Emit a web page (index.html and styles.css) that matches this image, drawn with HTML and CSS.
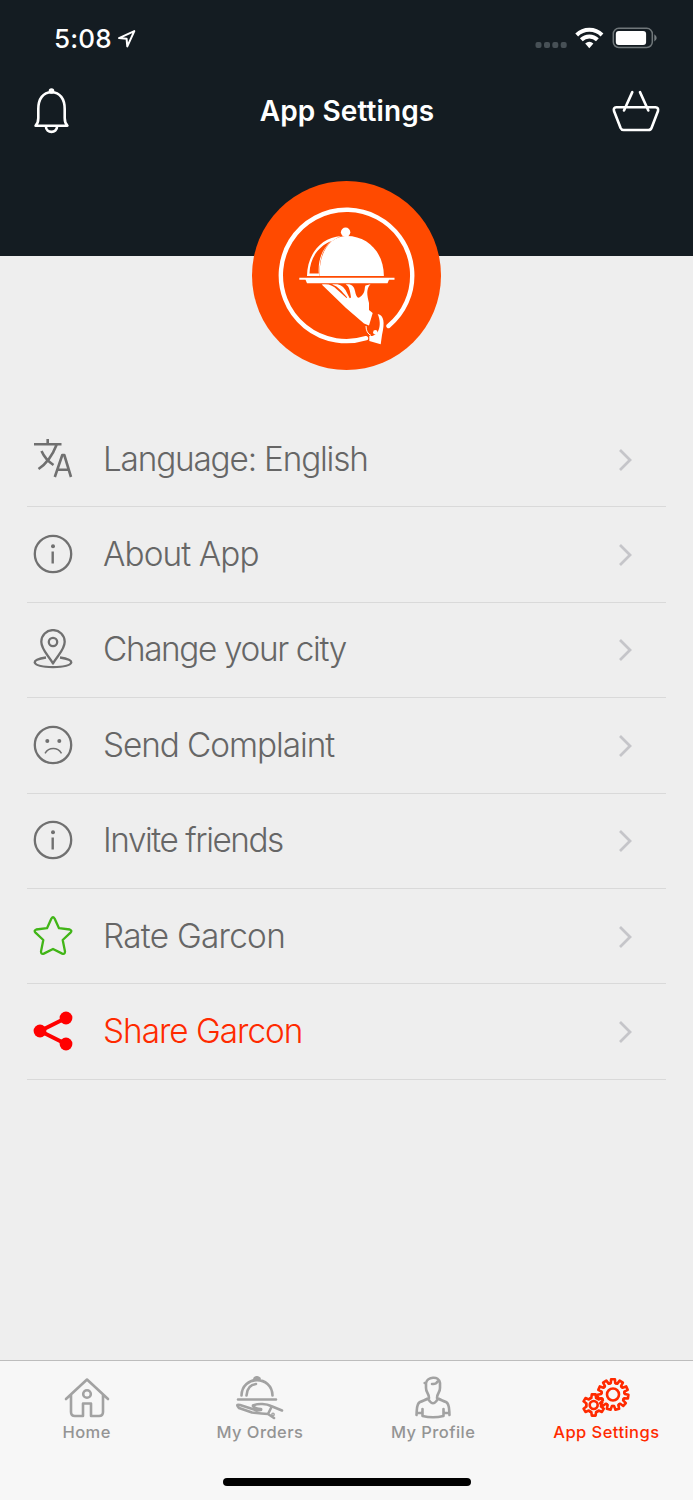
FILE: index.html
```html
<!DOCTYPE html>
<html lang="en">
<head>
<meta charset="utf-8">
<title>App Settings</title>
<link rel="stylesheet" href="styles.css">
</head>
<body>
<div class="app">
  <header class="header">
    <div class="status">
      <div class="status-time"><span class="clock">5:08</span>
        <svg class="locate" width="20" height="20" viewBox="0 0 20 20"><path d="M2 9.100 17.300 2.100 10.300 17.400 9.600 9.800Z"/></svg>
      </div>
      <svg class="status-icons" width="124" height="24" viewBox="0 0 124 24">
        <g fill="#475056"><rect x="1.500" y="16" width="6" height="6" rx="2"/><rect x="10" y="16" width="6" height="6" rx="2"/><rect x="18.300" y="16" width="6" height="6" rx="2"/><rect x="26.700" y="16" width="6" height="6" rx="2"/></g>
        <g fill="none" stroke="#fff" stroke-width="4"><path d="M42.700 9a18 18 0 0 1 25.300 0"/><path d="M47.300 13.700a11.500 11.500 0 0 1 16.100 0"/></g>
        <path fill="#fff" d="M51.200 17.600q4.100-3.700 8.200 0l-4.100 4.600z"/>
        <rect x="79.300" y="2.300" width="39" height="19.200" rx="5.500" fill="none" stroke="#70777a" stroke-width="1.500"/>
        <rect x="81.800" y="5" width="30.300" height="14" rx="3" fill="#fff"/>
        <path fill="#777e81" d="M120.300 8.200q4.800 3.700 0 7.400z"/>
      </svg>
    </div>
    <div class="navbar">
      <svg width="36" height="46" viewBox="0 0 36 46" class="line bell"><path d="M4.300 21C4.300 11 9 4.300 17.500 4.300S30.700 11 30.700 21v9q0 5 2.700 7.700H1.600Q4.300 35 4.300 30z"/><path d="M11.900 38.200c0 7.500 11.200 7.500 11.200 0"/><circle cx="17.500" cy="3" r="1.500"/></svg>
      <h1 class="title">App Settings</h1>
      <svg width="48" height="42" viewBox="0 0 48 42" class="line basket"><path d="M4.200 17.200H43.500Q46.700 17.500 46 21L39.500 38Q38.700 40 36.400 40H11.600Q9.500 40 8.600 38L2 21Q1.100 17.500 4.200 17.200M20.300 2.100 12 20.500M28 2.100 36.300 20.500"/></svg>
    </div>
  </header>
  <main class="content">
    <svg class="logo" width="189" height="190" viewBox="0 0 189 190">
      <circle cx="94.500" cy="94.500" r="94.500" fill="#ff4a00"/>
      <path d="M114 157.200A65.700 65.700 0 1 1 136.500 145" fill="none" stroke="#fff" stroke-width="4.400" stroke-linecap="round"/>
      <g fill="#fff">
        <circle cx="93.600" cy="51.300" r="4.700"/>
        <path d="M67.900 95C66.200 72 78 55.500 94 55c21-.5 37.900 16 37.900 40z"/>
        <path fill-rule="evenodd" d="M55 95C55.200 73 69 56.500 89 55l-4 2C72 64 66.700 76 67.700 95zM57.500 92.500h9.300c-1-13 3-24.500 12.500-32.500C66 65.500 58 77 57.500 92.500z"/>
        <path d="M47.300 96.700h95.200v2H137l-1.500 3.500H55l-1.500-3.500h-6.200z"/>
        <path d="M69.700 103.500C77 102.500 81 104.500 85 108.500L94.500 117 95.200 116.500C89 110 87 106 80 103.600 87 102 91 105 93.500 109L97.700 117.200 99 116.500C98 109 97 105 93.700 103.500 99 102.500 102 105 103 110 104 115 105.500 118 108 116 114 112 112 107 113.500 104.500L118.500 103.300C114 108 115 114 117 122V129L120.700 132 117 144.600 112 142.500 94 127Z"/>
        <path d="M125.700 133C132 134.500 133 141 130 154L128.700 163.300 117.300 160V154.700C124 157 131.500 147 125.700 133Z"/>
        <circle cx="123.300" cy="151.300" r="2.200"/>
      </g>
      <path d="M114 145q0 7 5 9.500" fill="none" stroke="#fff"/>
    </svg>
    <ul class="menu">
      <li class="row"><svg class="icon" viewBox="0 0 40 40"><path stroke-width="2.600" d="M1 5.200H28.500M14.700 0V5M23.500 6C20 15 13 25 5.500 30M8.500 12C12 20 16 23 20.500 26M21.800 38 29.300 16H31.300L38 38M24.500 30.700H35.700"/></svg><span class="label l1">Language: English</span><svg class="chev" viewBox="0 0 16 24"><path d="M2 2 12 12 2 22"/></svg></li>
      <li class="row"><svg class="icon" viewBox="0 0 40 40"><circle cx="20" cy="20" r="18.200"/><path stroke-width="2.400" d="M19.700 17.500V29.500"/><circle class="solid" cx="20" cy="12.300" r="2"/></svg><span class="label l2">About App</span><svg class="chev" viewBox="0 0 16 24"><path d="M2 2 12 12 2 22"/></svg></li>
      <li class="row"><svg class="icon" viewBox="0 0 40 40"><path d="M20 34.500C16 27 8.300 21 8.300 12.800A11.700 11.700 0 0 1 31.700 12.800C31.700 21 24 27 20 34.500ZM13 28.500C-3 30.500-3 37.500 20 38.200 43 37.500 43 30.500 27 28.500"/><circle cx="20" cy="13" r="4.200"/></svg><span class="label l3">Change your city</span><svg class="chev" viewBox="0 0 16 24"><path d="M2 2 12 12 2 22"/></svg></li>
      <li class="row"><svg class="icon" viewBox="0 0 40 40"><circle cx="20" cy="20" r="18.200"/><path stroke-width="1.500" d="M12 28.300C16 22 24.500 22 28.500 28.300"/><circle class="solid" cx="14.300" cy="16" r="2"/><circle class="solid" cx="26.300" cy="16" r="2"/></svg><span class="label l4">Send Complaint</span><svg class="chev" viewBox="0 0 16 24"><path d="M2 2 12 12 2 22"/></svg></li>
      <li class="row"><svg class="icon" viewBox="0 0 40 40"><circle cx="20" cy="20" r="18.200"/><path stroke-width="2.400" d="M19.700 17.500V29.500"/><circle class="solid" cx="20" cy="12.300" r="2"/></svg><span class="label l5">Invite friends</span><svg class="chev" viewBox="0 0 16 24"><path d="M2 2 12 12 2 22"/></svg></li>
      <li class="row"><svg class="icon green" viewBox="0 0 40 40"><path d="M18.400 2.500Q20 0 21.600 2.500L26 12.200 36.800 13.500Q39.500 14.500 37.500 16.600L29.700 24 32 35.500Q32 38.700 29.200 37.600L20 33 10.800 37.600Q8 38.700 8 35.500L10.300 24 2.500 16.600Q.5 14.500 3.200 13.500L14 12.200Z"/></svg><span class="label l6">Rate Garcon</span><svg class="chev" viewBox="0 0 16 24"><path d="M2 2 12 12 2 22"/></svg></li>
      <li class="row share"><svg class="icon red" viewBox="0 0 40 40"><path stroke-width="4" d="M33 7 7 20 33 33"/><circle class="solid" cx="33" cy="7" r="6.400"/><circle class="solid" cx="7" cy="20" r="6.400"/><circle class="solid" cx="33" cy="33" r="6.400"/></svg><span class="label l7">Share Garcon</span><svg class="chev" viewBox="0 0 16 24"><path d="M2 2 12 12 2 22"/></svg></li>
    </ul>
  </main>
  <nav class="tabs">
    <div class="tab"><svg class="tab-icon" viewBox="0 0 50 44"><path d="M4 23 25 3.500 46 23M9 19V36Q9 40 13 40H21V27.500H29V40H37Q41 40 41 36V19"/><circle cx="25" cy="18" r="3.800"/></svg><span>Home</span></div>
    <div class="tab"><svg class="tab-icon" viewBox="0 0 50 44"><path d="M6.500 19.500C7 -1 37 -1 37.500 19.500M11.500 19.500C12 12 16 8.500 21 8M19.500 4.500V2.500Q22 .2 24.500 2.500V4.500M3 23.500H41M18 29.500C23 27 32 28 36 30L47 34.500M18 30Q20 33 26 33Q27 34.500 22 34.500L5 29Q0 28 4 32L17 36.500Q26 37.500 33 38L39 42M36 32 33 38"/><circle class="solid" cx="38" cy="38.500" r=".6"/></svg><span>My Orders</span></div>
    <div class="tab"><svg class="tab-icon" viewBox="0 0 50 44"><path d="M18 7C19 1 31-1 32 7V12C32 17 29 17 29 22Q35 25 38 26C42 28 41 34 41.500 39M21 22C21 17 18 17 18 12V7H16.700M24 8Q28 8.500 29.500 5.500M21 22Q15 25 12 26C8 28 9 34 8.500 39M20.500 23.500 22 25.500Q25 29 28 25.500L29.500 23.500M14.500 33V40Q25 42.500 35.500 40V33M9 37H13M37 37H41"/></svg><span>My Profile</span></div>
    <div class="tab active"><svg class="tab-icon" viewBox="0 0 50 44">
      <defs><path id="cog-big" d="M-3.240-11.030 -2.200-11.500 -1.900-15.300H1.900L2.200-11.500 3.240-11.030"/><path id="cog-small" d="M-3.750-6.500 -2.400-7 -1.900-10.600H1.900L2.400-7 3.750-6.500"/></defs>
      <g transform="translate(12.700 29)"><use href="#cog-small"/><use href="#cog-small" transform="rotate(60)"/><use href="#cog-small" transform="rotate(120)"/><use href="#cog-small" transform="rotate(180)"/><use href="#cog-small" transform="rotate(240)"/><use href="#cog-small" transform="rotate(300)"/><circle r="4"/></g>
      <g transform="translate(32 18.500)"><circle class="cover" r="12.500"/><use href="#cog-big"/><use href="#cog-big" transform="rotate(32.730)"/><use href="#cog-big" transform="rotate(65.450)"/><use href="#cog-big" transform="rotate(98.180)"/><use href="#cog-big" transform="rotate(130.910)"/><use href="#cog-big" transform="rotate(163.640)"/><use href="#cog-big" transform="rotate(196.360)"/><use href="#cog-big" transform="rotate(229.090)"/><use href="#cog-big" transform="rotate(261.820)"/><use href="#cog-big" transform="rotate(294.550)"/><use href="#cog-big" transform="rotate(327.270)"/><circle r="6"/></g>
    </svg><span>App Settings</span></div>
    <div class="home-indicator"></div>
  </nav>
</div>
</body>
</html>
```
FILE: styles.css
```css
* { box-sizing: border-box; }
body { margin: 0; background: #eee; font-family: Inter, "Liberation Sans", sans-serif; }
.app { width: 693px; height: 1500px; display: flex; flex-direction: column; overflow: hidden; }
.header { height: 256px; flex: none; background: #141c22; color: #fff; }
.status { height: 76px; padding: 26px 35px 0 54px; display: flex; justify-content: space-between; align-items: flex-start; }
.status-time { display: flex; gap: 5px; height: 25px; align-items: center; }
.clock { font-size: 26px; font-weight: 550; line-height: 24px; letter-spacing: .2px; }
.locate { fill: none; stroke: #fff; stroke-width: 2; stroke-linejoin: round; }
.navbar { height: 70px; padding: 0 33px 0 34px; display: flex; align-items: center; justify-content: space-between; }
.line { fill: none; stroke: #fff; stroke-width: 2.600; stroke-linecap: round; stroke-linejoin: round; }
.title { margin: 0 0 0 12px; font-size: 28px; font-weight: 580; line-height: 34px; letter-spacing: .1px; }
.content { flex: 1; display: flex; flex-direction: column; align-items: center; }
.logo { display: block; flex: none; margin-top: -75px; }
.menu { list-style: none; width: 639px; margin: 41px 0 0; padding: 0; }
.row { height: 95.400px; display: flex; align-items: center; padding: 0 32px 1px 6px; border-bottom: 1px solid #d9d9d9; color: #666; }
.icon { width: 40px; height: 40px; margin-right: 30px; fill: none; stroke: #707070; stroke-width: 2.300; stroke-linejoin: round; flex: none; }
.icon .solid { fill: #707070; stroke: none; }
.icon.green { stroke: #41b517; }
.icon.red { stroke: #f00; }
.icon.red .solid { fill: #f00; }
.label { flex: 1; font-size: 33.300px; font-weight: 300; line-height: 40px; white-space: nowrap; }
.l1 { letter-spacing: -1.170px; }
.l2 { letter-spacing: -.900px; }
.l3 { letter-spacing: -1.350px; }
.l4 { letter-spacing: -1.050px; }
.l5 { letter-spacing: -1.450px; }
.l6 { letter-spacing: -.720px; }
.l7 { letter-spacing: -1px; }
.share { color: #ff2a00; }
.chev { width: 16px; height: 24px; margin-top: 2px; fill: none; stroke: #c5c5c9; stroke-width: 2.800; }
.tabs { height: 140px; flex: none; background: #f7f7f7; border-top: 1px solid #bdbdbd; display: grid; grid-template-columns: repeat(4, 1fr); grid-template-rows: 117px 8px; }
.tab { display: flex; flex-direction: column; align-items: center; padding-top: 15px; color: #949494; font-size: 16.500px; font-weight: 500; line-height: 24px; letter-spacing: .450px; }
.tab-icon { width: 50px; height: 44px; fill: none; stroke: #a2a2a2; stroke-width: 2.600; stroke-linecap: round; stroke-linejoin: round; }
.tab-icon .solid { fill: #a2a2a2; }
.active { color: #ff2a00; }
.active .tab-icon { stroke: #ff2a00; }
.tab-icon .cover { fill: #f7f7f7; stroke: none; }
.home-indicator { grid-column: 1 / -1; justify-self: center; width: 248px; height: 8px; border-radius: 4px; background: #000; }
```
